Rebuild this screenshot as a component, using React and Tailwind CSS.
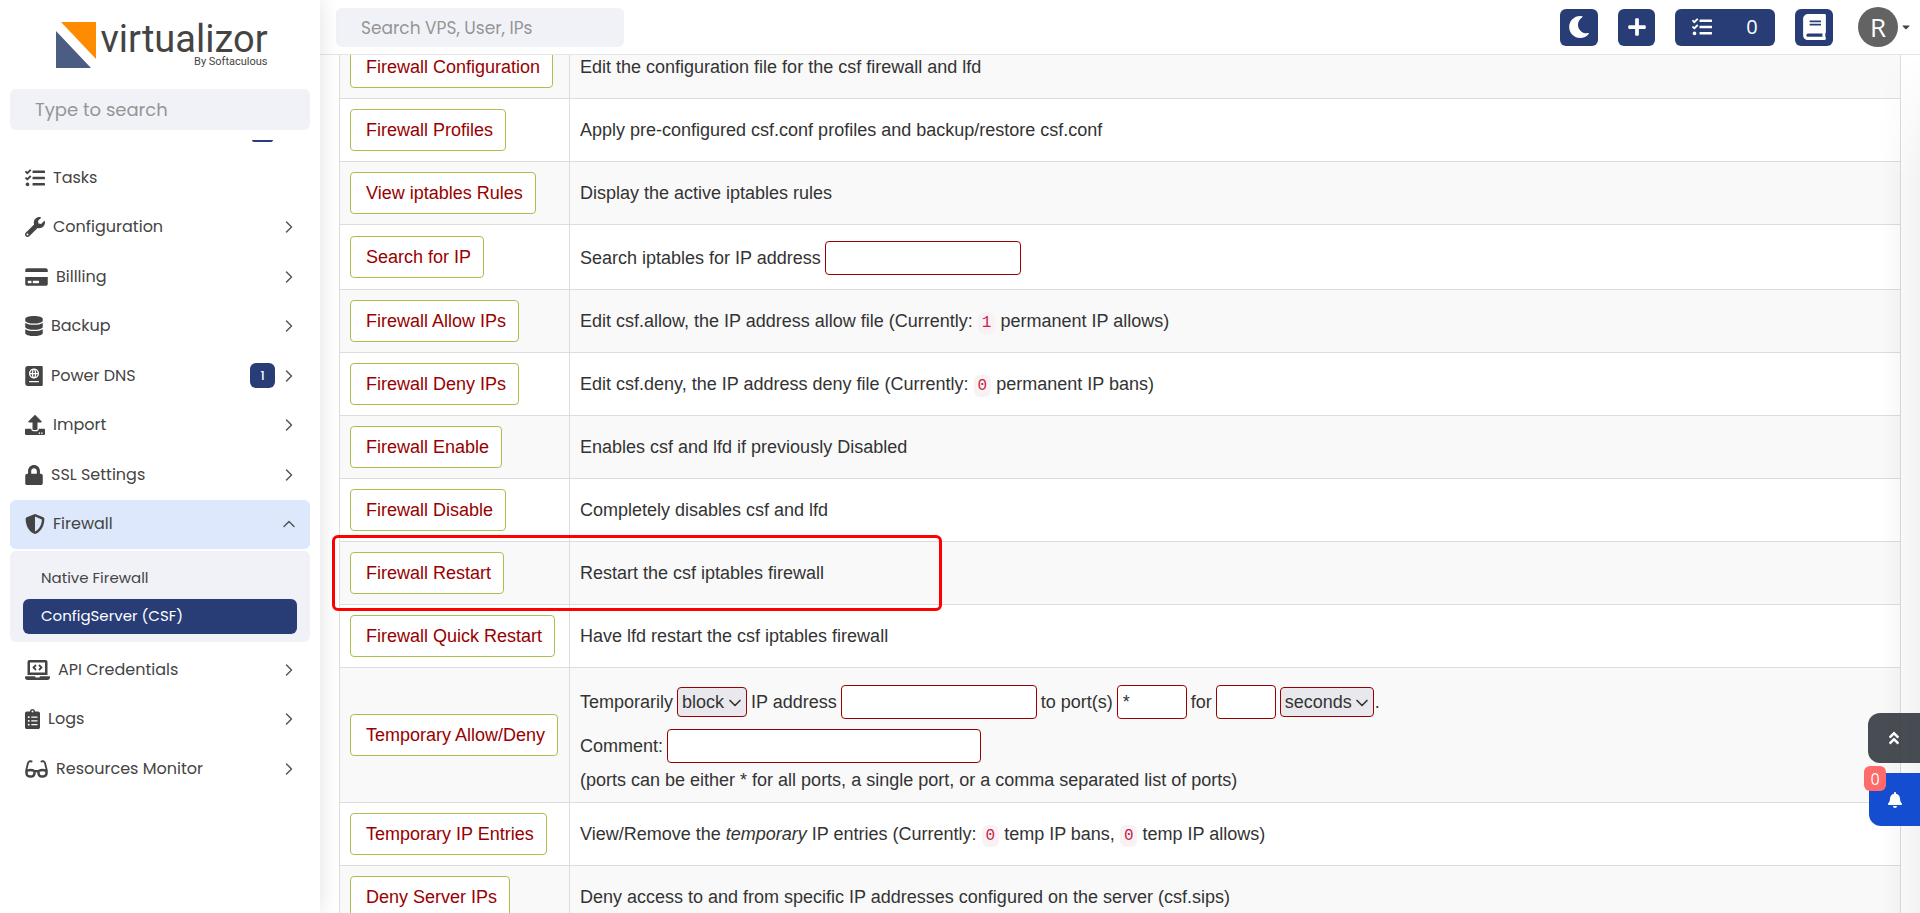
import {
  FaAngleDoubleUp,
  FaBell,
  FaBook,
  FaCaretDown,
  FaClipboardList,
  FaCreditCard,
  FaDatabase,
  FaGlasses,
  FaLaptopCode,
  FaLock,
  FaMoon,
  FaPassport,
  FaPlus,
  FaShieldAlt,
  FaTasks,
  FaUpload,
  FaWrench,
} from 'react-icons/fa'
import { ChevronDown, ChevronRight, ChevronUp } from 'lucide-react'

const MENU_TOP = [
  { label: 'Tasks', icon: FaTasks, size: 'w-5', leaf: true },
  { label: 'Configuration', icon: FaWrench, size: 'w-5' },
  { label: 'Billling', icon: FaCreditCard, size: 'w-[23px]' },
  { label: 'Backup', icon: FaDatabase, size: 'w-[18px]' },
  { label: 'Power DNS', icon: FaPassport, size: 'w-[18px]', badge: 1 },
  { label: 'Import', icon: FaUpload, size: 'w-5' },
  { label: 'SSL Settings', icon: FaLock, size: 'w-[18px]' },
  { label: 'Firewall', icon: FaShieldAlt, size: 'w-5', open: true },
]

const MENU_BOTTOM = [
  { label: 'API Credentials', icon: FaLaptopCode, size: 'w-[25px]' },
  { label: 'Logs', icon: FaClipboardList, size: 'w-[15px]' },
  { label: 'Resources Monitor', icon: FaGlasses, size: 'w-[23px]' },
]

function MenuItem({ label, icon: Icon, size, leaf, badge, open }) {
  return (
    <a
      href="#"
      className={`flex items-center rounded-md pr-[11px] pl-[15px] text-base text-[#444] ${open ? 'bg-[#dde8fc]' : ''}`}
    >
      <Icon className={`h-5 shrink-0 ${size}`} />
      <span className="ml-2 flex-1">{label}</span>
      {badge && (
        <span className="mr-1 flex size-[25px] items-center justify-center rounded-md bg-[#283d76] text-xs font-medium text-white">
          {badge}
        </span>
      )}
      {!leaf &&
        (open ? (
          <ChevronUp className="size-5 text-[#555]" strokeWidth={1.75} />
        ) : (
          <ChevronRight className="size-5 text-[#555]" strokeWidth={1.75} />
        ))}
    </a>
  )
}

function Logo() {
  return (
    <div className="flex justify-center pt-[22px] pl-1">
      <svg className="h-[46px] w-10" viewBox="0 0 40 46">
        <path d="M5 0h35v37z" fill="#ff8c00" />
        <path d="M0 9v37h35z" fill="#4b5d82" />
      </svg>
      <div className="ml-1 flex flex-col items-end font-['Roboto',sans-serif] text-[#444]">
        <span className="text-[38px] leading-[34px]">virtualizor</span>
        <span className="text-[11px] leading-3">By Softaculous</span>
      </div>
    </div>
  )
}

function Sidebar() {
  return (
    <aside className="z-30 w-80 shrink-0 bg-white px-2.5 shadow-[0_0_20px_rgba(0,0,0,0.12)]">
      <Logo />
      <input
        type="text"
        aria-label="Type to search"
        placeholder="Type to search"
        className="mt-[21px] block h-[41px] w-full rounded-md bg-[#f1f2f8] px-[25px] text-lg placeholder:text-[#959595]"
      />
      <nav className="mt-2.5">
        <div className="mr-[37px] ml-auto h-0.5 w-[21px] rounded-b-md bg-[#283d76]" />
        <div className="mt-[11px] grid h-[396px] auto-rows-fr">
          {MENU_TOP.map((item) => (
            <MenuItem key={item.label} {...item} />
          ))}
        </div>
        <div className="mt-0.5 flex flex-col gap-0.5 rounded-md bg-[#f1f2f8] px-[13px] py-2 text-[15px] text-[#444]">
          <a href="#" className="flex h-[38px] items-center px-[18px]">
            Native Firewall
          </a>
          <a href="#" className="flex h-[35px] items-center rounded-md bg-[#283d76] px-[18px] text-white">
            ConfigServer (CSF)
          </a>
        </div>
        <div className="mt-[3px] grid h-[149px] auto-rows-fr">
          {MENU_BOTTOM.map((item) => (
            <MenuItem key={item.label} {...item} />
          ))}
        </div>
      </nav>
    </aside>
  )
}

const HEADER_BUTTON = 'flex h-[37px] items-center justify-center rounded-md bg-[#283d76] text-white'

function Header() {
  return (
    <header className="relative z-20 flex h-[55px] items-start border-b border-[#e5e5e5] bg-white pt-2 pr-2.5 pl-4">
      <input
        type="text"
        aria-label="Search VPS, User, IPs"
        placeholder="Search VPS, User, IPs"
        className="h-[39px] w-72 rounded-md bg-[#f1f2f8] px-[25px] text-[17px] placeholder:text-[#959595]"
      />
      <div className="ml-auto flex items-center gap-5 font-['Open_Sans',sans-serif]">
        <button aria-label="Dark mode" className={`${HEADER_BUTTON} w-[38px]`}>
          <FaMoon className="size-[22px]" />
        </button>
        <button aria-label="Create" className={`${HEADER_BUTTON} w-[37px]`}>
          <FaPlus className="size-5" />
        </button>
        <button aria-label="Tasks" className={`${HEADER_BUTTON} w-[100px] gap-[34px] text-xl`}>
          <FaTasks className="size-5" />
          <span>0</span>
        </button>
        <button aria-label="Documentation" className={`${HEADER_BUTTON} w-[38px]`}>
          <FaBook className="h-[26px] w-[23px]" />
        </button>
        <button aria-label="Account" className="-my-px ml-[5px] flex items-center gap-1 text-[#444]">
          <span className="flex size-10 items-center justify-center rounded-full bg-[#636363] text-[26px] text-white">
            R
          </span>
          <FaCaretDown className="h-3 w-2" />
        </button>
      </div>
    </header>
  )
}

const FIELD = 'h-[34px] rounded border border-[#990000] bg-white px-[5px] text-[#333]'

function Select({ label, value, className }) {
  return (
    <span className="relative inline-flex">
      <select
        aria-label={label}
        defaultValue={value}
        className={`h-[30px] appearance-none rounded border border-[#990000] bg-[#e9e9ed] pl-1 text-[#333] ${className}`}
      >
        <option>{value}</option>
      </select>
      <ChevronDown className="pointer-events-none absolute top-1.5 right-0.5 size-5" />
    </span>
  )
}

function Count({ children }) {
  return (
    <code className="rounded-md bg-[#f9f2f4] px-1 py-0.5 font-['Liberation_Mono',monospace] text-base text-[#c7254e]">
      {children}
    </code>
  )
}

const ROWS = [
  { action: 'Firewall Configuration', info: 'Edit the configuration file for the csf firewall and lfd' },
  { action: 'Firewall Profiles', info: 'Apply pre-configured csf.conf profiles and backup/restore csf.conf' },
  { action: 'View iptables Rules', info: 'Display the active iptables rules' },
  {
    action: 'Search for IP',
    info: (
      <label className="flex h-11 items-center gap-1 pt-0.5">
        Search iptables for IP address
        <input type="text" className={`${FIELD} w-[196px]`} />
      </label>
    ),
  },
  {
    action: 'Firewall Allow IPs',
    info: (
      <>
        Edit csf.allow, the IP address allow file (Currently: <Count>1</Count> permanent IP allows)
      </>
    ),
  },
  {
    action: 'Firewall Deny IPs',
    info: (
      <>
        Edit csf.deny, the IP address deny file (Currently: <Count>0</Count> permanent IP bans)
      </>
    ),
  },
  { action: 'Firewall Enable', info: 'Enables csf and lfd if previously Disabled' },
  { action: 'Firewall Disable', info: 'Completely disables csf and lfd' },
  { action: 'Firewall Restart', info: 'Restart the csf iptables firewall', marked: true },
  { action: 'Firewall Quick Restart', info: 'Have lfd restart the csf iptables firewall' },
  {
    action: 'Temporary Allow/Deny',
    info: (
      <>
        <div className="flex h-12 items-center gap-1">
          Temporarily
          <Select label="Action" value="block" className="w-[70px]" />
          <label htmlFor="temp-ip">IP address</label>
          <input id="temp-ip" type="text" className={`${FIELD} w-[196px]`} />
          <label htmlFor="temp-ports">to port(s)</label>
          <input id="temp-ports" type="text" defaultValue="*" className={`${FIELD} w-[70px]`} />
          <label htmlFor="temp-time">for</label>
          <input id="temp-time" type="text" className={`${FIELD} w-[60px]`} />
          <span className="flex items-center gap-px">
            <Select label="Unit" value="seconds" className="w-[94px]" />.
          </span>
        </div>
        <label className="flex h-10 items-center gap-1">
          Comment:
          <input type="text" className={`${FIELD} w-[314px]`} />
        </label>
        <p className="pt-0.5 leading-6">
          (ports can be either * for all ports, a single port, or a comma separated list of ports)
        </p>
      </>
    ),
  },
  {
    action: 'Temporary IP Entries',
    info: (
      <>
        View/Remove the <i>temporary</i> IP entries (Currently: <Count>0</Count> temp IP bans, <Count>0</Count> temp
        IP allows)
      </>
    ),
  },
  {
    action: 'Deny Server IPs',
    info: 'Deny access to and from specific IP addresses configured on the server (csf.sips)',
  },
]

function CsfTable() {
  return (
    <table className="-mt-5 w-full border-collapse font-['Liberation_Sans',Arial,sans-serif] text-lg leading-[26px] text-[#333]">
      <tbody>
        {ROWS.map(({ action, info, marked }) => (
          <tr key={action} className="odd:bg-[#f9f9f9] even:bg-white">
            <td className="relative w-[230px] border border-[#ddd] px-2.5 py-2.5">
              <button className="block h-[42px] rounded border border-[#a6c150] bg-white pr-3 pl-[15px] whitespace-nowrap text-[#990000]">
                {action}
              </button>
              {marked && (
                <div className="pointer-events-none absolute -top-[7px] -left-2 z-10 h-[76px] w-[610px] rounded-md border-3 border-[#ff0000]" />
              )}
            </td>
            <td className="border border-[#ddd] px-2.5 py-2.5">{info}</td>
          </tr>
        ))}
      </tbody>
    </table>
  )
}

export default function App() {
  return (
    <div className="flex h-screen overflow-hidden bg-white font-['Poppins','Inter',sans-serif]">
      <Sidebar />
      <div className="flex min-w-0 flex-1 flex-col">
        <Header />
        <main className="relative flex-1 overflow-hidden px-[19px]">
          <CsfTable />
          {/* Soft shade along the window's right edge */}
          <div className="pointer-events-none absolute inset-y-0 right-0 w-10 mask-t-from-85% bg-linear-to-l from-black/5 to-transparent" />
        </main>
      </div>

      {/* Floating shortcuts */}
      <div className="fixed right-0 bottom-[87px] z-40 flex flex-col items-end gap-2.5 font-['Open_Sans',sans-serif]">
        <button
          aria-label="Back to top"
          className="flex h-[50px] w-[52px] items-center justify-center rounded-l-xl bg-[#343a40]/90 text-white"
        >
          <FaAngleDoubleUp className="size-4" />
        </button>
        <button
          aria-label="Notifications"
          className="relative flex h-[53px] w-[51px] items-center justify-center rounded-bl-xl bg-[#154dd1] text-white"
        >
          <FaBell className="size-4" />
          <span className="absolute -top-[7px] -left-[5px] flex h-[25px] w-[22px] items-center justify-center rounded-md bg-[#ff6b6b] text-base">
            0
          </span>
        </button>
      </div>
    </div>
  )
}
